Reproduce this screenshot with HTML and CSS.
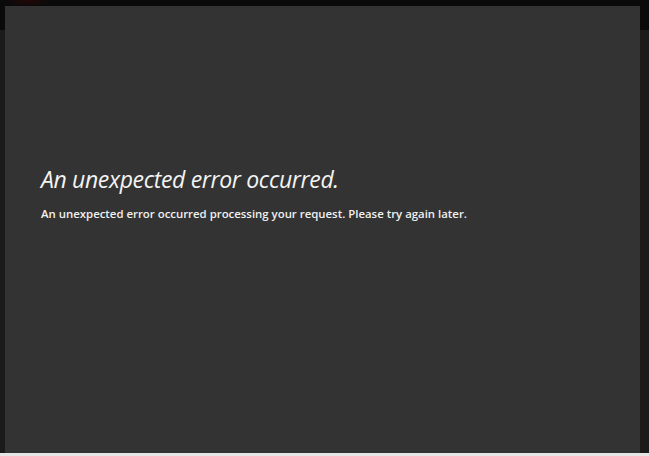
FILE: index.html
```html
<!DOCTYPE html>
<html lang="en">
<head>
<meta charset="utf-8">
<title>Error</title>
<link rel="stylesheet" href="styles.css">
</head>
<body>
<main class="panel">
  <h1 class="title">An unexpected error occurred.</h1>
  <p class="message">An unexpected error occurred processing your request. Please try again later.</p>
</main>
<div class="footer-strip"></div>
</body>
</html>
```
FILE: styles.css
```css
html, body {
  margin: 0;
  padding: 0;
  height: 456px;
  overflow: hidden;
}
body {
  background:
    radial-gradient(ellipse 22px 6px at 28px 1px, #220707, rgba(34,7,7,0) 100%),
    linear-gradient(#0a0a0a 0 30px, #1b1b1b 30px);
  font-family: "Open Sans", "Liberation Sans", sans-serif;
  display: flex;
  flex-direction: column;
}
.panel {
  margin: 6px 9px 0 5px;
  height: 447px;
  background: #333333;
  box-sizing: border-box;
  padding: 158px 0 0 36px;
}
.title {
  margin: 0;
  font-family: "Open Sans", sans-serif;
  font-style: italic;
  font-weight: 400;
  font-size: 23px;
  line-height: 30px;
  color: #f4f4f4;
  letter-spacing: -0.35px;
}
.message {
  margin: 12px 0 0;
  font-family: "Open Sans", sans-serif;
  font-weight: 600;
  font-size: 11.4px;
  line-height: 15px;
  color: #f0f0f0;
}
.footer-strip {
  height: 3px;
  background: #e6e6e6;
}
```
